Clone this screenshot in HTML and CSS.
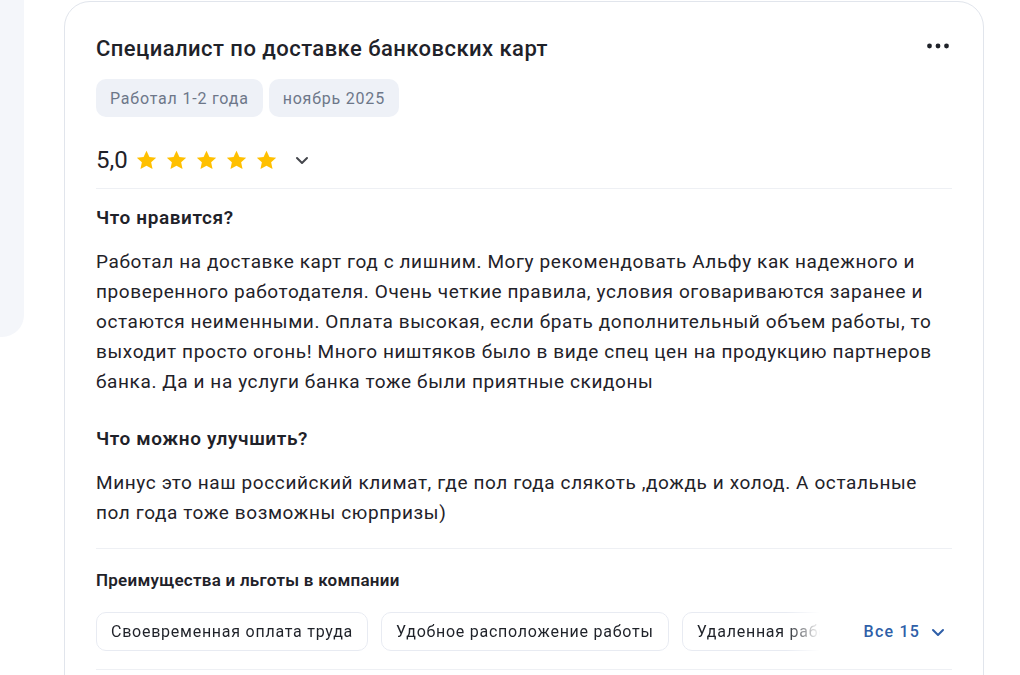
FILE: index.html
```html
<!DOCTYPE html>
<html lang="ru">
<head>
<meta charset="utf-8">
<link rel="stylesheet" href="styles.css">
</head>
<body>
<div class="page">
  <aside class="sidebar"></aside>
  <article class="card">
    <header class="card-head">
      <h2 class="title">Специалист по доставке банковских карт</h2>
      <button class="more" aria-label="Ещё">
        <svg width="24" height="24" viewBox="0 0 24 24"><circle cx="3.5" cy="12" r="2.4"/><circle cx="12" cy="12" r="2.4"/><circle cx="20.5" cy="12" r="2.4"/></svg>
      </button>
    </header>
    <div class="tags">
      <span class="tag">Работал 1-2 года</span>
      <span class="tag">ноябрь 2025</span>
    </div>
    <div class="rating">
      <span class="score">5,0</span>
      <span class="stars">
        <svg class="star" viewBox="0 0 24 24"><path d="M12 1.8l3.05 6.5 7.05.8-5.25 4.8 1.45 6.95L12 17.4l-6.3 3.45 1.45-6.95L1.9 9.1l7.05-.8z"/></svg>
        <svg class="star" viewBox="0 0 24 24"><path d="M12 1.8l3.05 6.5 7.05.8-5.25 4.8 1.45 6.95L12 17.4l-6.3 3.45 1.45-6.95L1.9 9.1l7.05-.8z"/></svg>
        <svg class="star" viewBox="0 0 24 24"><path d="M12 1.8l3.05 6.5 7.05.8-5.25 4.8 1.45 6.95L12 17.4l-6.3 3.45 1.45-6.95L1.9 9.1l7.05-.8z"/></svg>
        <svg class="star" viewBox="0 0 24 24"><path d="M12 1.8l3.05 6.5 7.05.8-5.25 4.8 1.45 6.95L12 17.4l-6.3 3.45 1.45-6.95L1.9 9.1l7.05-.8z"/></svg>
        <svg class="star" viewBox="0 0 24 24"><path d="M12 1.8l3.05 6.5 7.05.8-5.25 4.8 1.45 6.95L12 17.4l-6.3 3.45 1.45-6.95L1.9 9.1l7.05-.8z"/></svg>
      </span>
      <svg class="chev dark" width="16" height="16" viewBox="0 0 16 16"><polyline points="3,6 8,11 13,6"/></svg>
    </div>
    <hr class="divider">
    <section class="block">
      <h3 class="q">Что нравится?</h3>
      <p class="text">Работал на доставке карт год с лишним. Могу рекомендовать Альфу как надежного и проверенного работодателя. Очень четкие правила, условия оговариваются заранее и остаются неименными. Оплата высокая, если брать дополнительный объем работы, то выходит просто огонь! Много ништяков было в виде спец цен на продукцию партнеров банка. Да и на услуги банка тоже были приятные скидоны</p>
    </section>
    <section class="block second">
      <h3 class="q">Что можно улучшить?</h3>
      <p class="text">Минус это наш российский климат, где пол года слякоть ,дождь и холод. А остальные пол года тоже возможны сюрпризы)</p>
    </section>
    <hr class="divider low">
    <section class="benefits">
      <h4 class="b-title">Преимущества и льготы в компании</h4>
      <div class="b-row">
        <div class="chips">
          <span class="chip">Своевременная оплата труда</span>
          <span class="chip">Удобное расположение работы</span>
          <span class="chip">Удаленная работа</span>
        </div>
        <button class="all">Все 15
          <svg class="chev blue" width="16" height="16" viewBox="0 0 16 16"><polyline points="3,6 8,11 13,6"/></svg>
        </button>
      </div>
    </section>
    <hr class="divider last">
  </article>
</div>
</body>
</html>
```
FILE: styles.css
```css
* { box-sizing: border-box; }
html, body { margin: 0; padding: 0; background: #fff; }
body {
  font-family: Roboto, "Noto Sans", "Liberation Sans", sans-serif;
  color: #1f2229;
  height: 675px;
  overflow: hidden;
}
.page {
  display: flex;
  align-items: flex-start;
  gap: 40px;
}
.sidebar {
  width: 24px;
  height: 337px;
  background: #f4f6fa;
  border-bottom-right-radius: 22px;
  flex: none;
}
.card {
  width: 920px;
  margin-top: 1px;
  min-height: 760px;
  border: 1px solid #e1e5ec;
  border-radius: 26px;
  padding: 33px 31px 0 31px;
  flex: none;
}
.card-head {
  display: flex;
  justify-content: space-between;
  align-items: center;
}
.title {
  margin: 0;
  font-size: 22px;
  line-height: 28px;
  font-weight: 500;
  letter-spacing: 0.45px;
  color: #1f2229;
}
.more {
  border: 0;
  background: none;
  padding: 0;
  margin: -6px 2px 0 0;
  width: 24px;
  height: 24px;
  display: flex;
  fill: #1f2229;
}
.tags {
  display: flex;
  gap: 6px;
  margin-top: 16px;
}
.tag {
  height: 38px;
  display: inline-flex;
  align-items: center;
  padding: 0 14px;
  background: #eef1f7;
  border-radius: 10px;
  color: #6d7789;
  font-size: 16px;
  letter-spacing: 0.8px;
}
.rating {
  display: flex;
  align-items: center;
  height: 30px;
  margin-top: 28px;
}
.score {
  font-size: 24px;
  line-height: 30px;
  margin-right: 7px;
}
.stars {
  display: flex;
  gap: 7px;
}
.star {
  width: 23px;
  height: 23px;
  fill: #ffc000;
}
.chev {
  fill: none;
  stroke-width: 2;
  stroke-linecap: round;
  stroke-linejoin: round;
}
.chev.dark { stroke: #45474d; margin-left: 16px; }
.chev.blue { stroke: #2f5fa8; }
.divider {
  border: 0;
  border-top: 1px solid #eef0f4;
  margin: 13px 0 0 0;
}
.block { padding-top: 17px; }
.block.second { padding-top: 30px; }
.q {
  margin: 0;
  font-size: 19px;
  line-height: 24px;
  font-weight: 600;
  letter-spacing: 0.6px;
}
.text {
  margin: 17px 0 0 0;
  font-size: 19px;
  line-height: 30px;
  letter-spacing: 0.6px;
}
.divider.low { margin-top: 20px; }
.benefits { padding-top: 21px; }
.b-title {
  margin: 0;
  font-size: 17px;
  line-height: 20px;
  font-weight: 600;
  letter-spacing: 0.25px;
}
.b-row {
  display: flex;
  align-items: center;
  margin-top: 22px;
}
.chips {
  flex: 1;
  min-width: 0;
  display: flex;
  gap: 13px;
  overflow: hidden;
  -webkit-mask-image: linear-gradient(to right, #000 calc(100% - 34px), transparent 100%);
  mask-image: linear-gradient(to right, #000 calc(100% - 34px), transparent 100%);
}
.chip {
  flex: none;
  height: 39px;
  display: inline-flex;
  align-items: center;
  padding: 0 14px;
  border: 1px solid #e8ebf2;
  border-radius: 10px;
  font-size: 16px;
  letter-spacing: 0.75px;
  color: #1f2229;
}
.all {
  flex: none;
  border: 0;
  background: none;
  font-family: inherit;
  font-size: 16px;
  font-weight: 500;
  letter-spacing: 1.2px;
  color: #2f5fa8;
  padding: 0 6px 0 44px;
  display: flex;
  align-items: center;
  gap: 10px;
  height: 39px;
}
.divider.last { margin-top: 18px; }
```
